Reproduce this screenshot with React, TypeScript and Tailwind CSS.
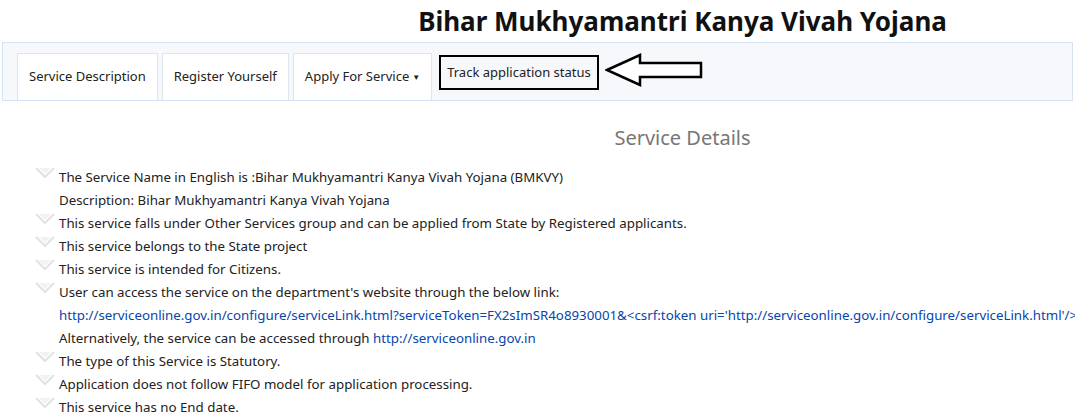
export default function App() {
  const Bullet = () => (
    <svg className="absolute left-[-24px] top-[1px] w-[20px] h-[12px]" viewBox="0 0 20 12">
      <path d="M1 1 L10 10 L19 1" fill="none" stroke="#e2e2e2" strokeWidth="2" />
      <path d="M4 1 L10 7 L16 1" fill="#f2f2f2" stroke="none" />
    </svg>
  );
  const items: { b: boolean; c: React.ReactNode }[] = [
    { b: true, c: 'The Service Name in English is :Bihar Mukhyamantri Kanya Vivah Yojana (BMKVY)' },
    { b: false, c: 'Description: Bihar Mukhyamantri Kanya Vivah Yojana' },
    { b: true, c: 'This service falls under Other Services group and can be applied from State by Registered applicants.' },
    { b: true, c: 'This service belongs to the State project' },
    { b: true, c: 'This service is intended for Citizens.' },
    { b: true, c: "User can access the service on the department's website through the below link:" },
    { b: false, c: <span className="text-[#0645ad] whitespace-nowrap">http://serviceonline.gov.in/configure/serviceLink.html?serviceToken=FX2sImSR4o8930001&amp;&lt;csrf:token uri='http://serviceonline.gov.in/configure/serviceLink.html'/&gt;</span> },
    { b: false, c: <>Alternatively, the service can be accessed through <span className="text-[#0645ad]">http://serviceonline.gov.in</span></> },
    { b: true, c: 'The type of this Service is Statutory.' },
    { b: true, c: 'Application does not follow FIFO model for application processing.' },
    { b: true, c: 'This service has no End date.' },
  ];
  const tab = 'h-full flex items-center px-[11px] border border-b-0 border-[#dde6ee] bg-white';
  return (
    <div className="w-[1075px] h-[419px] overflow-hidden bg-white font-['Noto_Sans',sans-serif] text-[#222]">
      <h1 className="h-[42px] flex items-center justify-center pl-[290px] text-[26px] font-bold font-['Open_Sans',sans-serif] text-[#111]">
        Bihar Mukhyamantri Kanya Vivah Yojana
      </h1>
      <div className="h-[59px] bg-[#f6f8fb] border border-[#d4e4f4] mx-[2px] flex items-end pl-[14px] text-[13px] gap-[4px]">
        <div className="h-[47px] flex gap-[4px]">
          <div className={tab}>Service Description</div>
          <div className={tab}>Register Yourself</div>
          <div className={tab}>Apply For Service<span className="ml-[3px] text-[8px]">▼</span></div>
          <div className="h-full flex items-center ml-[3px] pt-[2px]">
            <div className="h-[35px] mt-[-10px] flex items-center px-[6px] border-2 border-black">Track application status</div>
          </div>
        </div>
        <svg className="self-center mb-[4px] ml-[2px]" width="100" height="34" viewBox="0 0 100 34">
          <path d="M2 17 L35 2 L35 10 L96 10 L96 24 L35 24 L35 32 Z" fill="white" stroke="black" strokeWidth="2.5" />
        </svg>
      </div>
      <div className="text-center text-[20px] text-[#777] mt-[25px] pl-[290px] leading-[24px]">Service Details</div>
      <ul className="mt-[16px] pl-[59px] text-[13.3px] leading-[23px]">
        {items.map((it, i) => (
          <li key={i} className="relative whitespace-nowrap">
            {it.b && <Bullet />}
            {it.c}
          </li>
        ))}
      </ul>
    </div>
  );
}
